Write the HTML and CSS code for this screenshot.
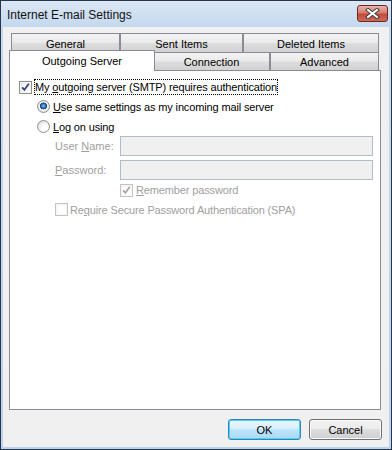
FILE: index.html
```html
<!DOCTYPE html>
<html>
<head>
    <title>Internet E-mail Settings</title>
    <link rel="stylesheet" href="styles.css">
</head>
<body>
    <div class="window">
        <div class="titlebar">
            <span class="title">Internet E-mail Settings</span>
            <div class="close">
                <svg width="15" height="11" viewBox="0 0 15 11">
                    <path d="M3 2 L12 9 M12 2 L3 9" stroke="#3a3a3a" stroke-width="4" stroke-linecap="square"/>
                    <path d="M3 2 L12 9 M12 2 L3 9" stroke="#ffffff" stroke-width="2" stroke-linecap="square"/>
                </svg>
            </div>
        </div>
        <div class="client">
            <div class="tabs">
                <div class="tab-row">
                    <div class="tab w-general">General</div>
                    <div class="tab w-sent">Sent Items</div>
                    <div class="tab w-deleted">Deleted Items</div>
                </div>
                <div class="tab-row bottom-row">
                    <div class="tab selected">Outgoing Server</div>
                    <div class="tab w-connection">Connection</div>
                    <div class="tab w-advanced">Advanced</div>
                </div>
            </div>
            <div class="panel">
                <div class="row r1">
                    <span class="check">
                        <svg width="11" height="11" viewBox="0 0 11 11"><path d="M2.2 5.3 L4.4 7.9 L8.8 1.8" fill="none" stroke="#33457d" stroke-width="1.8"/></svg>
                    </span>
                    <span class="label focus">My <u>o</u>utgoing server (SMTP) requires authentication</span>
                </div>
                <div class="row r2 indent1">
                    <span class="radio on"></span>
                    <span class="label"><u>U</u>se same settings as my incoming mail server</span>
                </div>
                <div class="row r3 indent1">
                    <span class="radio"></span>
                    <span class="label"><u>L</u>og on using</span>
                </div>
                <div class="row r4 indent2">
                    <span class="field-label">User <u>N</u>ame:</span>
                    <span class="input"></span>
                </div>
                <div class="row r5 indent2">
                    <span class="field-label"><u>P</u>assword:</span>
                    <span class="input"></span>
                </div>
                <div class="row r6 indent3">
                    <span class="check disabled">
                        <svg width="11" height="11" viewBox="0 0 11 11"><path d="M2.2 5.3 L4.4 7.9 L8.8 1.8" fill="none" stroke="#a8a8a8" stroke-width="1.8"/></svg>
                    </span>
                    <span class="label gray"><u>R</u>emember password</span>
                </div>
                <div class="row r7 indent2">
                    <span class="check disabled"></span>
                    <span class="label gray spa">Re<u>q</u>uire Secure Password Authentication (SPA)</span>
                </div>
            </div>
            <div class="buttons">
                <div class="button default">OK</div>
                <div class="button">Cancel</div>
            </div>
        </div>
    </div>
</body>
</html>
```

FILE: styles.css
```css
* {
    box-sizing: border-box;
}
body {
    margin: 0;
    padding: 0;
    font-family: "Liberation Sans", Arial, sans-serif;
    font-size: 11px;
    color: #000000;
}
.window {
    width: 392px;
    height: 450px;
    display: flex;
    flex-direction: column;
    border: 1px solid #27364b;
    background: linear-gradient(#dbe7f5, #c4d8ee 26px, #bcd3ec);
}
.titlebar {
    height: 26px;
    display: flex;
    justify-content: space-between;
    align-items: flex-start;
    padding: 4px 3px 0 6px;
}
.title {
    font-size: 12px;
    line-height: 20px;
    color: #111111;
}
.close {
    width: 31px;
    height: 17px;
    border: 1px solid #6b2a24;
    border-radius: 3px;
    background: linear-gradient(#e9b3ab, #d77c70 45%, #c24a3b 55%, #cf6a55);
    display: flex;
    align-items: center;
    justify-content: center;
}
.client {
    flex: 1;
    margin: 0 2px 2px;
    background: #f0f0f0;
    padding: 6px 7px 0 6px;
    display: flex;
    flex-direction: column;
}

/* tabs */
.tabs {
    margin-left: 2px;
    width: 368px;
}
.tab-row {
    display: flex;
    align-items: flex-start;
}
.tab {
    height: 19px;
    border: 1px solid #898c95;
    border-bottom: none;
    background: linear-gradient(#f3f3f3, #ebebeb 45%, #dcdcdc 55%, #d2d2d2);
    display: flex;
    align-items: center;
    justify-content: center;
    padding-top: 1px;
}
.bottom-row .tab {
    height: 18px;
}
.w-general { width: 109px; }
.w-sent { width: 123px; }
.w-deleted { width: 136px; }
.w-connection { width: 117px; }
.w-advanced { width: 109px; }
.bottom-row .tab.selected {
    width: 146px;
    height: 21px;
    margin: -2px -2px -1px -2px;
    background: #ffffff;
    position: relative;
    z-index: 1;
    padding-top: 0;
}

/* panel */
.panel {
    width: 372px;
    height: 340px;
    border: 1px solid #898c95;
    background: #ffffff;
    padding: 7px 0 0 9px;
}
.row {
    display: flex;
    align-items: center;
}
.r1 { height: 18px; }
.r2 { height: 21px; }
.r3 { height: 19px; }
.r4 { height: 20px; }
.r5 { height: 20px; margin-top: 4px; }
.r6 { height: 20px; }
.r7 { height: 19px; }
.indent1 { margin-left: 18px; }
.indent2 { margin-left: 36px; }
.indent3 { margin-left: 101px; }

.check {
    width: 13px;
    height: 13px;
    border: 1px solid #8e8f8f;
    background: #ffffff;
    box-shadow: inset 0 0 0 1px #f4f4f4, inset 1px 1px 3px #c9c9c9;
    display: flex;
    align-items: center;
    justify-content: center;
    flex-shrink: 0;
}
.check.disabled {
    border-color: #c3c3c3;
    box-shadow: inset 0 0 0 1px #f7f7f7, inset 1px 1px 2px #e2e2e2;
}
.radio {
    width: 13px;
    height: 13px;
    border: 1px solid #8e8f8f;
    border-radius: 50%;
    background: radial-gradient(circle at 65% 70%, #ffffff 30%, #d8d8d8 90%);
    flex-shrink: 0;
}
.radio.on {
    background: radial-gradient(circle at 50% 45%, #8cc6f0 0, #2d73b9 25%, #173d79 40%, #f4f4f4 45%, #d8d8d8 90%);
}
.label {
    margin-left: 3px;
    line-height: 14px;
    white-space: nowrap;
    letter-spacing: -0.14px;
}
.focus {
    display: inline-block;
    height: 14px;
    outline: 1px dotted #000000;
}
.gray,
.field-label {
    color: #a0a0a0;
}
.spa {
    margin-left: 2px;
}
.field-label {
    width: 65px;
    white-space: nowrap;
}
.input {
    width: 253px;
    height: 20px;
    border: 1px solid #aebccd;
    background: #f0f0f0;
}

/* buttons */
.buttons {
    display: flex;
    justify-content: flex-end;
    gap: 8px;
    margin-top: 9px;
}
.button {
    width: 73px;
    height: 21px;
    border: 1px solid #707070;
    border-radius: 3px;
    background: linear-gradient(#f2f2f2, #ebebeb 50%, #dddddd 50%, #cfcfcf);
    box-shadow: inset 0 0 0 1px #fbfbfb;
    display: flex;
    align-items: center;
    justify-content: center;
}
.button.default {
    border-color: #3c7fb1;
    background: linear-gradient(#eaf6fd, #d9f0fc 50%, #bee6fd 50%, #a7d9f5);
    box-shadow: inset 0 0 0 1px #48d3f8;
}
```
